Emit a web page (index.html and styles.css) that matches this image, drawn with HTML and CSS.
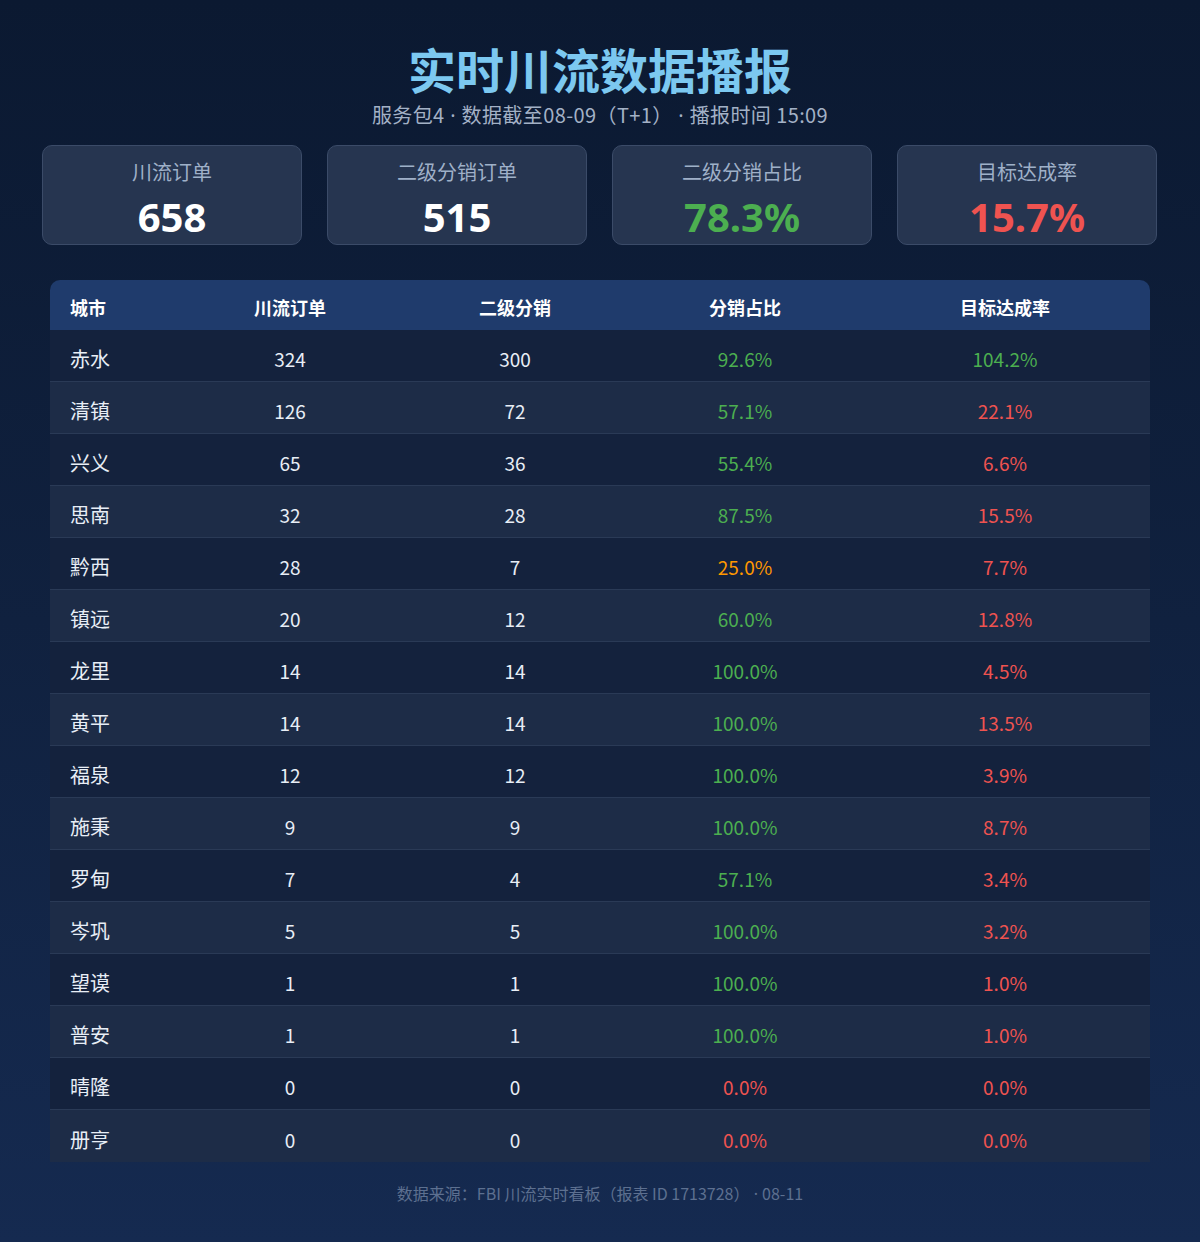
FILE: index.html
```html
<!DOCTYPE html>
<html lang="zh-CN">
<head>
<meta charset="utf-8">
<title>实时川流数据播报</title>
<link rel="stylesheet" href="styles.css">
</head>
<body>
<div class="page">
  <header class="head">
    <h1 class="title">实时川流数据播报</h1>
    <div class="subtitle">服务包4<span class="dot"> · </span>数据截至08-09（T+1）<span class="dot"> · </span>播报时间 15:09</div>
  </header>
  <section class="cards">
    <div class="card"><div class="card-label">川流订单</div><div class="card-value">658</div></div>
    <div class="card"><div class="card-label">二级分销订单</div><div class="card-value">515</div></div>
    <div class="card"><div class="card-label">二级分销占比</div><div class="card-value green">78.3%</div></div>
    <div class="card"><div class="card-label">目标达成率</div><div class="card-value red">15.7%</div></div>
  </section>
  <table class="grid">
    <colgroup><col class="c1"><col class="c2"><col class="c3"><col class="c4"><col class="c5"></colgroup>
    <thead>
      <tr><th class="city">城市</th><th>川流订单</th><th>二级分销</th><th>分销占比</th><th>目标达成率</th></tr>
    </thead>
    <tbody>
      <tr><td class="city">赤水</td><td>324</td><td>300</td><td class="g">92.6%</td><td class="g">104.2%</td></tr>
      <tr><td class="city">清镇</td><td>126</td><td>72</td><td class="g">57.1%</td><td class="r">22.1%</td></tr>
      <tr><td class="city">兴义</td><td>65</td><td>36</td><td class="g">55.4%</td><td class="r">6.6%</td></tr>
      <tr><td class="city">思南</td><td>32</td><td>28</td><td class="g">87.5%</td><td class="r">15.5%</td></tr>
      <tr><td class="city">黔西</td><td>28</td><td>7</td><td class="o">25.0%</td><td class="r">7.7%</td></tr>
      <tr><td class="city">镇远</td><td>20</td><td>12</td><td class="g">60.0%</td><td class="r">12.8%</td></tr>
      <tr><td class="city">龙里</td><td>14</td><td>14</td><td class="g">100.0%</td><td class="r">4.5%</td></tr>
      <tr><td class="city">黄平</td><td>14</td><td>14</td><td class="g">100.0%</td><td class="r">13.5%</td></tr>
      <tr><td class="city">福泉</td><td>12</td><td>12</td><td class="g">100.0%</td><td class="r">3.9%</td></tr>
      <tr><td class="city">施秉</td><td>9</td><td>9</td><td class="g">100.0%</td><td class="r">8.7%</td></tr>
      <tr><td class="city">罗甸</td><td>7</td><td>4</td><td class="g">57.1%</td><td class="r">3.4%</td></tr>
      <tr><td class="city">岑巩</td><td>5</td><td>5</td><td class="g">100.0%</td><td class="r">3.2%</td></tr>
      <tr><td class="city">望谟</td><td>1</td><td>1</td><td class="g">100.0%</td><td class="r">1.0%</td></tr>
      <tr><td class="city">普安</td><td>1</td><td>1</td><td class="g">100.0%</td><td class="r">1.0%</td></tr>
      <tr><td class="city">晴隆</td><td>0</td><td>0</td><td class="r">0.0%</td><td class="r">0.0%</td></tr>
      <tr><td class="city">册亨</td><td>0</td><td>0</td><td class="r">0.0%</td><td class="r">0.0%</td></tr>
    </tbody>
  </table>
  <footer class="foot">数据来源：FBI 川流实时看板（报表 ID 1713728）<span class="dot"> · </span>08-11</footer>
</div>
</body>
</html>
```

FILE: styles.css
```css
html, body {
  margin: 0;
  padding: 0;
}
body {
  width: 1200px;
  min-height: 1242px;
  background: linear-gradient(180deg, #0b1931 0%, #10213f 50%, #152a50 100%);
  font-family: "Noto Sans CJK SC", "Noto Sans", sans-serif;
  color: #e6edf5;
}
.page {
  padding-top: 40px;
}
.head {
  text-align: center;
}
.title {
  margin: 0;
  font-size: 48px;
  line-height: 56px;
  font-weight: 700;
  color: #7cc8f0;
}
.subtitle {
  margin-top: 7px;
  height: 24px;
  overflow: visible;
  font-size: 20px;
  line-height: 24px;
  letter-spacing: 0.4px;
  color: #a3b1c6;
}
.dot {
  font-family: "Noto Sans", sans-serif;
  line-height: 20px;
}
.cards {
  display: flex;
  gap: 25px;
  padding-left: 42px;
  margin-top: 18px;
}
.card {
  box-sizing: border-box;
  width: 260px;
  height: 100px;
  background: #263550;
  border: 1px solid #3b4b68;
  border-radius: 10px;
  text-align: center;
  padding-top: 13px;
}
.card-label {
  font-size: 20px;
  line-height: 26px;
  color: #9fb0c8;
}
.card-value {
  margin-top: 9px;
  font-family: "Noto Sans", "Noto Sans CJK SC", sans-serif;
  font-size: 40px;
  line-height: 46px;
  font-weight: 700;
  color: #ffffff;
}
.card-value.green { color: #4caf50; }
.card-value.red { color: #ef5350; }

.grid {
  margin: 35px 0 0 50px;
  width: 1100px;
  border-collapse: separate;
  border-spacing: 0;
  table-layout: fixed;
}
.c1 { width: 130px; }
.c2 { width: 220px; }
.c3 { width: 230px; }
.c4 { width: 230px; }
.c5 { width: 290px; }
.grid th {
  box-sizing: border-box;
  height: 50px;
  padding: 3px 0 0;
  background: #1f3b6c;
  color: #ffffff;
  font-size: 18px;
  font-weight: 700;
  text-align: center;
}
.grid th:first-child { border-top-left-radius: 10px; }
.grid th:last-child { border-top-right-radius: 10px; }
.grid td {
  box-sizing: border-box;
  height: 52px;
  padding: 6px 0 0;
  font-size: 19px;
  text-align: center;
  color: #e8eef6;
  border-bottom: 1px solid #2a3a56;
}
.grid tbody tr:nth-child(odd) td { background: #14223d; }
.grid tbody tr:nth-child(even) td { background: #1d2c47; }
.grid tbody tr:last-child td { border-bottom: none; }
.grid td.city {
  text-align: left;
  padding-left: 20px;
  font-size: 20px;
}
.grid th.city {
  text-align: left;
  padding-left: 20px;
}
.grid td.g { color: #4caf50; }
.grid td.r { color: #ef5350; }
.grid td.o { color: #ff9800; }

.foot {
  margin-top: 22px;
  text-align: center;
  font-size: 16px;
  line-height: 18px;
  color: #5d7090;
}
```
